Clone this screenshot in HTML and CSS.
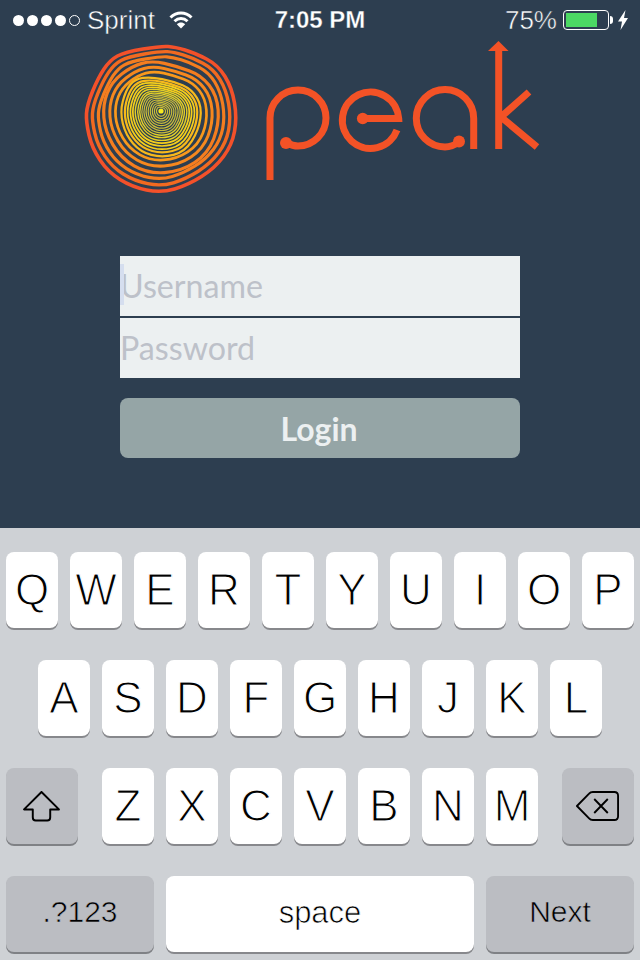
FILE: index.html
```html
<!DOCTYPE html>
<html lang="en">
<head>
<meta charset="utf-8">
<title>Peak login</title>
<link rel="stylesheet" href="styles.css">
</head>
<body>
<main class="app">
  <header class="status">
    <div class="status-left">
      <span class="signal"><i class="dot"></i><i class="dot"></i><i class="dot"></i><i class="dot"></i><i class="dot dot-empty"></i></span>
      <span class="carrier">Sprint</span>
      <svg class="wifi" width="24" height="18" viewBox="0 0 24 18"><path class="wifi-arc" d="M1.5 6.5C7.5 .6 16.5 .6 22.5 6.5"/><path class="wifi-arc" d="M5.5 10.3C9.3 6.6 14.7 6.6 18.5 10.3"/><path class="wifi-fill" d="M12 17.5 7.8 13.3C10.2 11 13.8 11 16.2 13.3Z"/></svg>
    </div>
    <div class="time">7:05 PM</div>
    <div class="status-right">
      <span class="percent">75%</span>
      <span class="battery"><span class="battery-level"></span></span>
      <span class="battery-nub"></span>
      <svg class="bolt" width="10" height="20" viewBox="0 0 10 20"><path class="bolt-fill" d="M7.5 0 0 11.5H4L2.5 20 10 8H6Z"/></svg>
    </div>
  </header>

  <svg class="logo" width="480" height="160" viewBox="80 40 480 160" aria-label="peak">
    <defs>
      <path id="ring-a" class="ring" d="M7 -64.5Q14 -64 24 -61Q34 -58 45.5 -52Q57 -46 64 -34.5Q71 -23 73.5 -8Q76 7 73.5 20.5Q71 34 62.5 45.5Q54 57 40.5 65.5Q27 74 13.5 78Q0 82 -14.5 79Q-29 76 -41 68.5Q-53 61 -61 49Q-69 37 -72 24Q-75 11 -74.5 2.5Q-74 -6 -68.5 -19.5Q-63 -33 -57 -42Q-51 -51 -43.5 -55Q-36 -59 -18 -62Q0 -65 7 -64.5Z"/>
      <path id="ring-b" class="ring" d="M3 -42.5Q14 -40 25 -36Q36 -32 43 -23Q50 -14 51 -1Q52 12 47 25Q42 38 30 46Q18 54 3 55Q-12 56 -24 49Q-36 42 -43 30Q-50 18 -51 6Q-52 -6 -48 -16Q-44 -26 -35 -33Q-26 -40 -17 -42.5Q-8 -45 3 -42.5Z"/>
      <path id="ring-c" class="ring" d="M1 -28Q11 -26 19 -22.5Q27 -19 31.5 -11.5Q36 -4 34.5 6.5Q33 17 27 26.5Q21 36 11 38.5Q1 41 -8.5 38.5Q-18 36 -24.5 28.5Q-31 21 -33.5 11Q-36 1 -33.5 -8.5Q-31 -18 -27 -23Q-23 -28 -16 -29Q-9 -30 1 -28Z"/>
    </defs>
    <g transform="translate(161 111)">
      <use href="#ring-a" class="tier-1" transform="scale(1)"/>
      <use href="#ring-a" class="tier-2" transform="scale(.92)"/>
      <use href="#ring-a" class="tier-3" transform="scale(.84)"/>
      <use href="#ring-b" class="tier-3" transform="scale(1.12)"/>
      <use href="#ring-b" class="tier-4" transform="scale(1)"/>
      <use href="#ring-b" class="tier-5" transform="scale(.89)"/>
      <use href="#ring-c" class="tier-6" transform="scale(1.14)"/>
      <use href="#ring-c" class="tier-6" transform="scale(1.04)"/>
      <use href="#ring-c" class="tier-7" transform="scale(.96)"/>
      <use href="#ring-c" class="tier-7" transform="scale(.88)"/>
      <use href="#ring-c" class="tier-7" transform="scale(.81)"/>
      <use href="#ring-c" class="tier-8" transform="scale(.74)"/>
      <use href="#ring-c" class="tier-8" transform="scale(.67)"/>
      <use href="#ring-c" class="tier-8" transform="scale(.61)"/>
      <use href="#ring-c" class="tier-9" transform="scale(.55)"/>
      <use href="#ring-c" class="tier-9" transform="scale(.49)"/>
      <use href="#ring-c" class="tier-9" transform="scale(.43)"/>
      <use href="#ring-c" class="tier-9" transform="scale(.37)"/>
      <use href="#ring-c" class="tier-9" transform="scale(.31)"/>
      <use href="#ring-c" class="tier-9" transform="scale(.25)"/>
      <use href="#ring-c" class="tier-9" transform="scale(.19)"/>
      <use href="#ring-c" class="tier-9" transform="scale(.13)"/>
      <circle class="ring-core" r="2.6"/>
    </g>
    <g class="mark">
      <path d="M270 180V118A28 28 0 1 1 298 146Q293 146 287 143"/>
      <path d="M363 118.5H398.7A28.2 28.2 0 1 0 397 130"/>
      <path d="M473.7 149V118.5A28.7 28.7 0 1 0 445 147Q452 147 459 142"/>
      <path d="M498.7 149V48M529 92 501 117 537 147"/>
    </g>
    <g class="mark-fill">
      <circle cx="286" cy="143" r="6"/>
      <circle cx="362.7" cy="118.5" r="5.8"/>
      <circle cx="459" cy="141.5" r="6"/>
      <path d="M498.5 41 508.5 51H488Z"/>
    </g>
  </svg>

  <form class="form">
    <div class="field"><span class="caret"></span>Username</div>
    <div class="field field-next">Password</div>
    <div class="login">Login</div>
  </form>

  <section class="keyboard">
    <div class="row">
      <div class="key">Q</div><div class="key">W</div><div class="key">E</div><div class="key">R</div><div class="key">T</div><div class="key">Y</div><div class="key">U</div><div class="key">I</div><div class="key">O</div><div class="key">P</div>
    </div>
    <div class="row">
      <div class="key">A</div><div class="key">S</div><div class="key">D</div><div class="key">F</div><div class="key">G</div><div class="key">H</div><div class="key">J</div><div class="key">K</div><div class="key">L</div>
    </div>
    <div class="row row-wide">
      <div class="key key-action key-side">
        <svg class="key-icon" width="37" height="31" viewBox="0 0 38 32"><path class="glyph" d="M19 1 1 19H10V27Q10 30.500 13 30.500H25Q28 30.500 28 27V19H37Z"/></svg>
      </div>
      <div class="row">
        <div class="key">Z</div><div class="key">X</div><div class="key">C</div><div class="key">V</div><div class="key">B</div><div class="key">N</div><div class="key">M</div>
      </div>
      <div class="key key-action key-side">
        <svg class="key-icon" width="43" height="30" viewBox="0 0 46 32"><path class="glyph" d="M1 16 14 2.800Q15.500 1 18 1H41Q45 1 45 5V27Q45 31 41 31H18Q15.500 31 14 29.200Z"/><path class="glyph" d="M19.500 8.500 34 23.500M34 8.500 19.500 23.500"/></svg>
      </div>
    </div>
    <div class="row">
      <div class="key key-action key-wide">.?123</div>
      <div class="key key-space">space</div>
      <div class="key key-action key-wide">Next</div>
    </div>
  </section>
</main>
</body>
</html>
```
FILE: styles.css
```css
* { box-sizing: border-box; }
html, body { margin: 0; padding: 0; }
body { background: #2c3e50; font-family: "Liberation Sans", Arial, sans-serif; }

.app { width: 640px; height: 960px; display: flex; flex-direction: column; overflow: hidden; background: #2d3e50; }

/* status bar */
.status { height: 40px; display: grid; grid-template-columns: 1fr auto 1fr; align-items: center; color: #fff; font-size: 26px; -webkit-text-stroke: .5px #2d3e50; }
.status-left { display: flex; align-items: center; padding-left: 13px; }
.signal { display: flex; gap: 3px; }
.dot { width: 11px; height: 11px; border-radius: 50%; background: #fff; }
.dot-empty { background: transparent; border: 1px solid #fff; }
.carrier { margin-left: 7px; }
.wifi { margin-left: 14px; }
.wifi-arc { fill: none; stroke: #fff; stroke-width: 3; }
.wifi-fill, .bolt-fill { fill: #fff; }
.time { font-weight: 700; font-size: 24px; -webkit-text-stroke: .3px #2d3e50; }
.status-right { display: flex; align-items: center; justify-content: flex-end; padding-right: 12px; }
.percent { margin-right: 6px; }
.battery { width: 46px; height: 20px; border: 1.500px solid #fff; border-radius: 4px; padding: 2px; display: flex; }
.battery-level { width: 31px; background: #4cd964; }
.battery-nub { width: 3px; height: 8px; margin-left: 1px; background: #fff; border-radius: 0 3px 3px 0; }
.bolt { margin-left: 5px; }

/* logo */
.logo { display: block; margin: 0 auto; flex: none; }
.ring { fill: none; vector-effect: non-scaling-stroke; }
.tier-1 { stroke: #f4512a; stroke-width: 3.600; }
.tier-2 { stroke: #f26a20; stroke-width: 3.400; }
.tier-3 { stroke: #f47d1f; stroke-width: 3.200; }
.tier-4 { stroke: #f6881e; stroke-width: 3; }
.tier-5 { stroke: #f8981c; stroke-width: 2.700; }
.tier-6 { stroke: #f7b91c; stroke-width: 2.200; }
.tier-7 { stroke: #f5cf1c; stroke-width: 1.700; }
.tier-8 { stroke: #e3cf28; stroke-width: 1.400; }
.tier-9 { stroke: #c9bd3a; stroke-width: 1.200; }
.ring-core { fill: #f7ea1f; }
.mark { fill: none; stroke: #f35226; stroke-width: 7; }
.mark-fill { fill: #f35226; }

/* form */
.form { width: 400px; margin: 56px auto 0; flex: none; }
.field { position: relative; height: 60px; background: #ecf0f1; color: #bdc1c9; font-family: Lato, sans-serif; font-size: 32.200px; line-height: 60px; }
.field-next { margin-top: 2px; }
.caret { position: absolute; left: 0; top: 8px; width: 4px; height: 41px; background: #d5deef; }
.login { margin-top: 20px; height: 60px; border-radius: 8px; background: #95a5a6; color: #ecf0f1; font-family: Lato, sans-serif; font-weight: 700; font-size: 32px; line-height: 61px; text-align: center; padding-right: 2px; }

/* keyboard */
.keyboard { margin-top: 70px; flex: 1; background: #ced1d5; padding: 24px 6px 0; display: flex; flex-direction: column; gap: 32px; }
.row { display: flex; justify-content: center; gap: 12px; }
.row-wide { justify-content: space-between; }
.key { width: 52px; height: 76px; display: flex; align-items: center; justify-content: center; background: #fff; border-radius: 8px; box-shadow: 0 2px 0 #87888c; color: #000; font-size: 44px; -webkit-text-stroke: 1.200px #fff; }
.key-action { background: #bbbdc2; box-shadow: 0 2px 0 #7f8185; font-size: 30px; padding-bottom: 4px; -webkit-text-stroke: .6px #bbbdc2; }
.key-side { width: 72px; padding-bottom: 0; }
.key-wide { width: 148px; }
.key-space { width: 308px; font-size: 31px; padding-bottom: 2px; -webkit-text-stroke: .7px #fff; }
.key-icon { margin-right: 2px; }
.glyph { fill: none; stroke: #000; stroke-width: 2; stroke-linejoin: round; }
```
